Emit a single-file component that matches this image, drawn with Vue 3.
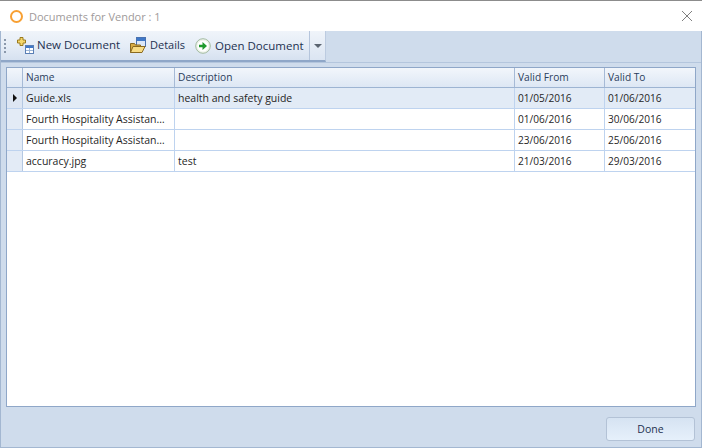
<script setup>
const columns = ['Name', 'Description', 'Valid From', 'Valid To']

const rows = [
  { name: 'Guide.xls', description: 'health and safety guide', from: '01/05/2016', to: '01/06/2016' },
  { name: 'Fourth Hospitality Assistan…', description: '', from: '01/06/2016', to: '30/06/2016' },
  { name: 'Fourth Hospitality Assistan…', description: '', from: '23/06/2016', to: '25/06/2016' },
  { name: 'accuracy.jpg', description: 'test', from: '21/03/2016', to: '29/03/2016' }
]
</script>

<template>
  <div class="window">
    <header class="titlebar">
      <span class="logo"></span>
      <span class="title">Documents for Vendor : 1</span>
      <svg class="close" width="12" height="12" viewBox="0 0 12 12">
        <path d="M1 1l10 10M11 1L1 11" stroke="#7f7f7f" stroke-width="1" fill="none" />
      </svg>
    </header>

    <div class="body">
      <div class="toolbar-row">
        <div class="toolbar">
          <span class="grip"><i></i><i></i><i></i><i></i></span>
          <button class="tool tool-new">
            <svg width="17" height="17" viewBox="0 0 17 17">
              <path d="M3 .5h3v2.500h2.500v3H6v2.500H3V6H.5V3H3z" fill="#f5d76a" stroke="#9a7a1c" />
              <rect x="8.500" y="8.500" width="8" height="8" fill="#fff" stroke="#5a7fb5" />
              <rect x="9" y="9" width="7" height="2" fill="#3f78c8" />
              <path d="M9 13.500h7M12.500 11v5" stroke="#9db6d6" fill="none" />
            </svg>
            New Document
          </button>
          <button class="tool tool-details">
            <svg width="17" height="16" viewBox="0 0 17 16">
              <rect x="6.500" y=".5" width="9" height="9" fill="#dbe7f7" stroke="#4a72b0" />
              <rect x="7" y="1" width="8" height="3" fill="#3f78c8" />
              <path d="M.5 6.500h4l1 1.500h5v7.500h-10z" fill="#d9ac45" stroke="#8a6a20" />
              <path d="M.5 15.500l2.500-6h12l-3 6z" fill="#f8dc84" stroke="#8a6a20" />
            </svg>
            Details
          </button>
          <button class="tool tool-open">
            <svg width="16" height="16" viewBox="0 0 16 16">
              <circle cx="8" cy="8" r="7.300" fill="#eef3ea" stroke="#a3bba2" />
              <circle cx="8" cy="8" r="5.500" fill="#fff" />
              <path d="M4 6.800h3.500V4l4.500 4-4.500 4V9.200H4z" fill="#1f9a2d" />
            </svg>
            Open Document
          </button>
          <span class="overflow">
            <span class="caret"></span>
          </span>
        </div>
      </div>

      <main class="content">
        <div class="grid">
          <div class="grid-row grid-head">
            <div class="indicator"></div>
            <div v-for="col in columns" :key="col" class="cell">{{ col }}</div>
          </div>
          <div
            v-for="(row, i) in rows"
            :key="i"
            class="grid-row grid-body"
            :class="{ selected: i === 0 }"
          >
            <div class="indicator">
              <span v-if="i === 0" class="pointer"></span>
            </div>
            <div class="cell">{{ row.name }}</div>
            <div class="cell">{{ row.description }}</div>
            <div class="cell date">{{ row.from }}</div>
            <div class="cell date">{{ row.to }}</div>
          </div>
        </div>
      </main>

      <footer class="footer">
        <button class="done">Done</button>
      </footer>
    </div>
  </div>
</template>

<style>
html, body {
  margin: 0;
  overflow: hidden;
}
</style>

<style scoped>
.window {
  width: 702px;
  height: 448px;
  box-sizing: border-box;
  display: flex;
  flex-direction: column;
  border-top: 1px solid #8c8c8c;
  background: #fff;
  font-family: "Open Sans", "Noto Sans", sans-serif;
  font-size: 10.500px;
  color: #1f1f1f;
  overflow: hidden;
}

.titlebar {
  height: 30px;
  flex: none;
  display: flex;
  align-items: center;
  padding: 0 9px 0 10px;
  gap: 6px;
}

.logo {
  width: 13px;
  height: 13px;
  box-sizing: border-box;
  border: 2px solid #f8a033;
  border-radius: 50%;
}

.title {
  flex: 1;
  font-size: 11px;
  color: #a09a9a;
}

.close {
  flex: none;
}

.body {
  flex: 1;
  min-height: 0;
  display: flex;
  flex-direction: column;
  box-sizing: border-box;
  background: #cfdcec;
  border: 1px solid #a3b7d1;
  border-top: 0;
}

.toolbar-row {
  height: 32px;
  flex: none;
  display: flex;
  align-items: flex-start;
  border-bottom: 1px solid #b4c6dd;
  box-sizing: border-box;
}

.toolbar {
  width: 325px;
  height: 31px;
  box-sizing: border-box;
  display: flex;
  align-items: center;
  padding-left: 3px;
  background: linear-gradient(#f0f4fa, #e4ecf6 55%, #d6e1f0);
  border-right: 1px solid #bccbe0;
  border-bottom: 2px solid #8fa7c8;
}

.grip {
  width: 3px;
  display: flex;
  flex-direction: column;
  gap: 2px;
  margin-right: 10px;
}

.grip i {
  width: 2px;
  height: 2px;
  background: #8a98ab;
}

.tool {
  display: flex;
  align-items: center;
  border: 0;
  background: none;
  padding: 0;
  font: inherit;
  font-size: 11.500px;
  color: #1e3150;
  height: 24px;
  margin-top: -3px;
}

.tool svg {
  margin-top: 2px;
}

.tool-new {
  gap: 3px;
  width: 113px;
}

.tool-details {
  gap: 3px;
  width: 65px;
  font-size: 11px;
}

.tool-open {
  gap: 4px;
  width: 114px;
  margin-top: -1px;
}

.overflow {
  width: 16px;
  height: 29px;
  margin-left: auto;
  box-sizing: border-box;
  border-left: 1px solid #b5c5dc;
  display: flex;
  align-items: center;
  justify-content: center;
  background: linear-gradient(#f0f4fa, #dbe5f2);
}

.caret {
  width: 0;
  height: 0;
  border-left: 4px solid transparent;
  border-right: 4px solid transparent;
  border-top: 4px solid #5b6470;
}

.content {
  flex: 1;
  min-height: 0;
  padding: 4px 5px 0;
}

.grid {
  height: 340px;
  box-sizing: border-box;
  background: #fff;
  border: 1px solid #8fa7c8;
}

.grid-row {
  display: grid;
  grid-template-columns: 16px 152px 340px 90px 1fr;
}

.grid-head {
  height: 20px;
  background: linear-gradient(#f2f6fb, #dde7f4);
  border-bottom: 1px solid #9db4d2;
  box-sizing: border-box;
  color: #2a3d5c;
  font-size: 10.200px;
}

.grid-head .cell,
.grid-head .indicator {
  border-right: 1px solid #a6bad6;
}

.grid-head .cell {
  padding-bottom: 2px;
}

.grid-body {
  height: 21px;
  box-sizing: border-box;
  border-bottom: 1px solid #bed3ef;
}

.grid-body .cell {
  border-right: 1px solid #bed3ef;
}

.grid-row .cell:last-child {
  border-right: 0;
}

.grid-body .indicator {
  background: #e3ebf6;
  border-right: 1px solid #b4c8e2;
  display: flex;
  align-items: center;
  justify-content: center;
}

.selected {
  background: #e2ebf6;
}

.selected .indicator {
  background: #dde6f3;
}

.pointer {
  width: 0;
  height: 0;
  border-top: 4px solid transparent;
  border-bottom: 4px solid transparent;
  border-left: 4px solid #111;
}

.cell {
  display: flex;
  align-items: center;
  padding: 0 0 1px 3px;
  white-space: nowrap;
  overflow: hidden;
}

.date {
  font-size: 10.100px;
}

.footer {
  flex: none;
  height: 40px;
  display: flex;
  justify-content: flex-end;
  align-items: flex-start;
  padding: 10px 6px 0 0;
  box-sizing: border-box;
}

.done {
  width: 89px;
  height: 24px;
  border: 1px solid #b3c2d6;
  border-radius: 3px;
  background: linear-gradient(#d6e3f2, #e6f0fb);
  font: inherit;
  color: #1e3150;
  padding: 0;
}
</style>
